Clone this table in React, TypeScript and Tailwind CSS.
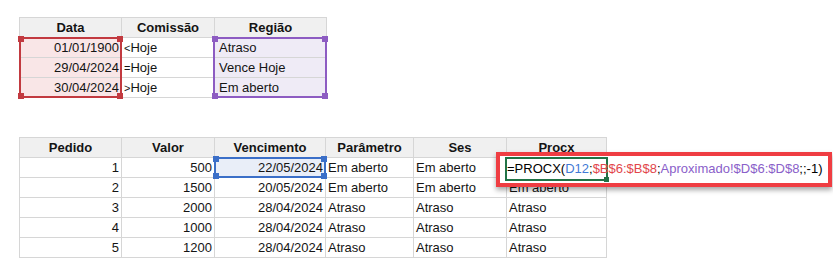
import React from "react";

const font = "font-['Liberation_Sans',Arial,sans-serif]";

const topRows = [
  { data: "01/01/1900", op: "<", regiao: "Atraso" },
  { data: "29/04/2024", op: "=", regiao: "Vence Hoje" },
  { data: "30/04/2024", op: ">", regiao: "Em aberto" },
];

const pedidos = [
  { id: 1, valor: 500, venc: "22/05/2024", param: "Em aberto", ses: "Em aberto", procx: "" },
  { id: 2, valor: 1500, venc: "20/05/2024", param: "Em aberto", ses: "Em aberto", procx: "Em aberto" },
  { id: 3, valor: 2000, venc: "28/04/2024", param: "Atraso", ses: "Atraso", procx: "Atraso" },
  { id: 4, valor: 1000, venc: "28/04/2024", param: "Atraso", ses: "Atraso", procx: "Atraso" },
  { id: 5, valor: 1200, venc: "28/04/2024", param: "Atraso", ses: "Atraso", procx: "Atraso" },
];

function Handles({ color }: { color: string }) {
  return (
    <>
      <span className={`absolute -left-[3px] -top-[3px] h-[6px] w-[6px] ${color}`} />
      <span className={`absolute -right-[3px] -top-[3px] h-[6px] w-[6px] ${color}`} />
      <span className={`absolute -left-[3px] -bottom-[3px] h-[6px] w-[6px] ${color}`} />
      <span className={`absolute -right-[3px] -bottom-[3px] h-[6px] w-[6px] ${color}`} />
    </>
  );
}

const cell = "h-[20px] border-r border-b border-[#d6d6d6] leading-[19px] whitespace-nowrap overflow-hidden";
const head = `${cell} bg-[#f0f0f0] font-bold text-center`;

function CriteriaTable() {
  return (
    <div className="relative grid w-fit grid-cols-[102px_93px_112px] border-l border-t border-[#d6d6d6]">
      <div className={head}>Data</div>
      <div className={head}>Comissão</div>
      <div className={head}>Região</div>
      {topRows.map((r) => (
        <React.Fragment key={r.data}>
          <div className={`${cell} bg-[#f9e6e7] pr-[2px] text-right`}>{r.data}</div>
          <div className={`${cell} pl-[2px]`}>
            <span className="text-[11px]">{r.op}</span>Hoje
          </div>
          <div className={`${cell} bg-[#efebf6] pl-[4px]`}>{r.regiao}</div>
        </React.Fragment>
      ))}

      {/* range highlights from the formula */}
      <div className="pointer-events-none absolute -left-px top-[19px] h-[61px] w-[103px] border-2 border-[#c23a40]">
        <Handles color="bg-[#c23a40]" />
      </div>
      <div className="pointer-events-none absolute left-[193px] top-[19px] h-[61px] w-[114px] border-2 border-[#8d5cc2]">
        <Handles color="bg-[#8d5cc2]" />
      </div>
    </div>
  );
}

function FormulaCallout() {
  return (
    <div className="absolute left-[476px] top-[14px] h-[35px] w-[336px] border-4 border-[#ef3d42] bg-white shadow-[0_3px_5px_rgba(0,0,0,0.35)]">
      <div className="absolute left-[5px] top-[1px] h-[24px] w-[103px] border-2 border-[#217346]">
        <span className="absolute -bottom-[3px] -right-[3px] h-[5px] w-[5px] bg-[#217346]" />
      </div>
      <div className="absolute left-[7px] top-[3px] whitespace-nowrap leading-[20px] text-black">
        =PROCX(<span className="text-[#3f7ad6]">D12</span>;
        <span className="text-[#e2464b]">$B$6:$B$8</span>;
        <span className="text-[#8a60c9]">Aproximado!$D$6:$D$8</span>;;-1)
      </div>
    </div>
  );
}

function PedidosTable() {
  return (
    <div className="relative grid w-fit grid-cols-[102px_93px_111px_88px_93px_100px] border-l border-t border-[#d6d6d6]">
      <div className={head}>Pedido</div>
      <div className={head}>Valor</div>
      <div className={head}>Vencimento</div>
      <div className={head}>Parâmetro</div>
      <div className={head}>Ses</div>
      <div className={head}>Procx</div>
      {pedidos.map((p, i) => (
        <React.Fragment key={p.id}>
          <div className={`${cell} pr-[2px] text-right`}>{p.id}</div>
          <div className={`${cell} pr-[2px] text-right`}>{p.valor}</div>
          <div className={`${cell} pr-[2px] text-right ${i === 0 ? "bg-[#e9eef8]" : ""}`}>{p.venc}</div>
          <div className={`${cell} pl-[2px]`}>{p.param}</div>
          <div className={`${cell} pl-[2px]`}>{p.ses}</div>
          <div className={`${cell} pl-[2px]`}>{p.procx}</div>
        </React.Fragment>
      ))}

      {/* selected cell */}
      <div className="pointer-events-none absolute left-[194px] top-[19px] h-[21px] w-[112px] border-2 border-[#3b6fc8]">
        <Handles color="bg-[#3b6fc8]" />
      </div>

      <FormulaCallout />
    </div>
  );
}

export default function App() {
  return (
    <div className={`${font} relative h-[276px] w-[833px] overflow-hidden bg-white pl-[19px] pt-[17px] text-[13px] text-[#141414]`}>
      <CriteriaTable />
      <div className="mt-[39px]">
        <PedidosTable />
      </div>
    </div>
  );
}
